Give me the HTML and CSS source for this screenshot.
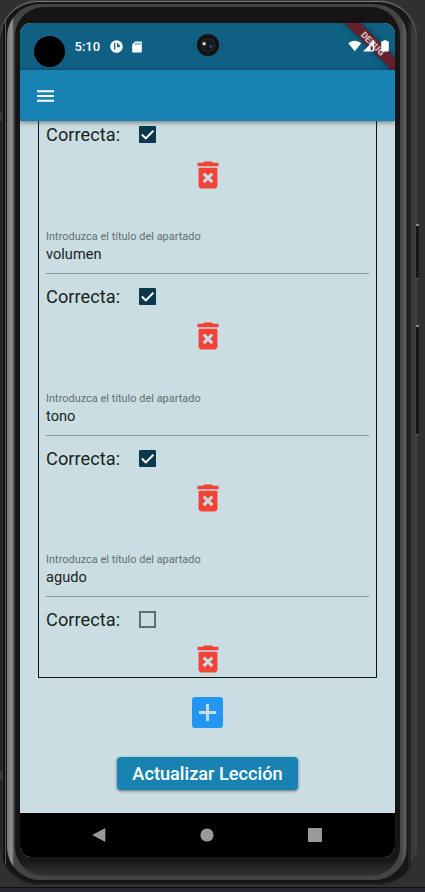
FILE: index.html
```
<!DOCTYPE html>
<html lang="es">
<head>
<meta charset="utf-8">
<title>Actualizar Lección</title>
<link rel="stylesheet" href="styles.css">
</head>
<body>
<svg width="0" height="0" class="defs">
  <symbol id="trash" viewBox="0 0 24 24">
    <path fill-rule="evenodd" d="M5.700 19c0 1.1.9 2 2 2h8.600c1.100 0 2-.9 2-2V8c0-.5-.4-.9-.9-.9H6.600c-.5 0-.9.4-.9.9zM5 3.900h3.500l1-.9h5l1 .9H19v2.300H5z"/>
    <path class="cross" d="M9.100 11l5.800 5.800M14.900 11l-5.800 5.800"/>
  </symbol>
  <symbol id="checked" viewBox="0 0 18 18">
    <rect width="18" height="18" rx="1"/>
    <path class="tick" d="M3 9l4.2 4.2L15.2 5"/>
  </symbol>
</svg>
<div class="phone">
  <i class="key left-top"></i><i class="key left-bottom"></i>
  <i class="key power"></i><i class="key volume"></i>
  <div class="rim">
    <div class="bezel">
      <div class="screen">
        <header class="status">
          <span class="punch"></span>
          <span class="clock">5:10</span>
          <svg class="app-dot" viewBox="0 0 13 13"><circle cx="6.5" cy="6.5" r="6.3" fill="#fff"/><path d="M4.700 2.800v7M7.600 3.200v3.300h1.500V4.500" fill="none" stroke="#106084" stroke-width="1.300"/></svg>
          <svg class="sd" viewBox="0 0 10 12"><path fill="#fff" d="M3.2.5H9a.8.8 0 0 1 .8.8v9.4a.8.8 0 0 1-.8.8H1a.8.8 0 0 1-.8-.8V3.6z"/><path d="M4 1.8v2M6 1.8v2M8 1.8v2" stroke="#106084" stroke-width=".9"/></svg>
          <svg class="camera" viewBox="0 0 24 24"><circle cx="12" cy="12" r="11.1" fill="#111214"/><circle cx="12" cy="12" r="7.500" fill="#202226"/><circle cx="12" cy="12" r="5.500" fill="#15181d"/><circle cx="8.2" cy="10.7" r="1.7" fill="#d5d7dc"/><circle cx="14.8" cy="13.3" r="1.5" fill="#294b76"/></svg>
          <div class="ribbon"><span>DEBUG</span></div>
          <svg class="signals" viewBox="0 0 41 12"><g fill="#fff"><path d="M.3 3.3C4-.2 9.500-.2 13.200 3.300L6.750 11.300z"/><path fill-rule="evenodd" d="M15 11.500L26 .5v11zM22.600 5.300h2.100v4.900h-2.100z"/><path d="M34 1.200h1.500V.3h3v.9H40a.8.8 0 0 1 .8.8v8.700a.8.8 0 0 1-.8.8h-6a.8.8 0 0 1-.8-.8V2a.8.8 0 0 1 .8-.8z"/></g></svg>
        </header>
        <nav class="appbar"><svg viewBox="0 0 18 12"><path fill="#fff" d="M0 0h18v2H0zM0 5h18v2H0zM0 10h18v2H0z"/></svg></nav>
        <main class="content">
          <section class="panel">
            <article class="answer">
              <div class="check"><span>Correcta:</span><svg><use href="#checked"/></svg></div>
              <svg class="trash"><use href="#trash"/></svg>
            </article>
            <article class="answer">
              <div class="field"><label>Introduzca el título del apartado</label><p>volumen</p></div>
              <div class="check"><span>Correcta:</span><svg><use href="#checked"/></svg></div>
              <svg class="trash"><use href="#trash"/></svg>
            </article>
            <article class="answer">
              <div class="field"><label>Introduzca el título del apartado</label><p>tono</p></div>
              <div class="check"><span>Correcta:</span><svg><use href="#checked"/></svg></div>
              <svg class="trash"><use href="#trash"/></svg>
            </article>
            <article class="answer">
              <div class="field"><label>Introduzca el título del apartado</label><p>agudo</p></div>
              <div class="check"><span>Correcta:</span><svg viewBox="0 0 18 18"><rect x="1" y="1" width="16" height="16" fill="none" stroke="#5d686b" stroke-width="2"/></svg></div>
              <svg class="trash"><use href="#trash"/></svg>
            </article>
          </section>
          <svg class="add" viewBox="0 0 18 18"><path fill="#2196f3" fill-rule="evenodd" d="M1.800 0h14.400A1.800 1.800 0 0 1 18 1.800v14.400a1.800 1.800 0 0 1-1.800 1.800H1.800A1.800 1.800 0 0 1 0 16.200V1.800A1.800 1.800 0 0 1 1.800 0zM8.150 4v4.150H4v1.700h4.150V14h1.700V9.850H14v-1.700H9.850V4z"/></svg>
          <button class="submit">Actualizar Lección</button>
        </main>
        <footer class="navbar">
          <svg viewBox="0 0 14 14"><path d="M.2 7L13.300 0v14z"/></svg>
          <svg viewBox="0 0 14 14"><circle cx="7" cy="7" r="6.600"/></svg>
          <svg viewBox="0 0 14 14"><rect width="14" height="14" rx=".7"/></svg>
        </footer>
      </div>
    </div>
  </div>
</div>
<div class="desk"></div>
</body>
</html>
```
FILE: styles.css
```
* { box-sizing: border-box; }
body {
  margin: 0;
  width: 425px;
  height: 892px;
  overflow: hidden;
  background: #2f3032;
  font-family: Roboto, sans-serif;
  color: #1b1f21;
}
.defs { position: absolute; }
svg { display: block; flex: none; }
.phone {
  position: relative;
  width: 417px;
  height: 886px;
  padding: 4px 10px 6px 7px;
  border-radius: 38px;
  background: linear-gradient(90deg, #222 0 2px, #303030 2px 3px, #111 3px 5px, #555 5px 6px, #161616 6px 408px, #222 408px 411px, #393939 411px 415px, #404040 415px);
  box-shadow: inset 0 1px #3a3a3a, inset 0 2px #777, inset 0 -1px #383838, inset 0 -3px #202020;
}
.key { position: absolute; display: block; }
.left-top, .left-bottom { left: 0; width: 3px; height: 9px; background: #383838; }
.left-top { top: 112px; }
.left-bottom { top: 771px; }
.power, .volume { left: 416px; width: 3px; background: #171717; border-top: 2px solid #888; border-bottom: 1px solid #555; }
.power { top: 224px; height: 55px; }
.volume { top: 325px; height: 110px; }
.rim {
  height: 876px;
  padding: 3px 7px 4px 8px;
  border-radius: 33px;
  background: linear-gradient(90deg, #777 0, #929292 5px, #444 7px, #444 392px, #454545 394px, #5b5b5b 398px, #404040);
}
.bezel {
  height: 869px;
  padding: 16px 5px 0;
  border-radius: 29px;
  background: linear-gradient(#151515 0 845px, #191919 854px, #343434 869px);
}
.screen {
  width: 375px;
  height: 834px;
  display: flex;
  flex-direction: column;
  overflow: hidden;
  border-radius: 11px;
  background: #c9dde2;
}
.status {
  position: relative;
  flex: none;
  height: 47px;
  display: flex;
  align-items: center;
  padding-left: 13.500px;
  background: #106084;
  color: #fff;
}
.punch { width: 31px; height: 31px; border-radius: 50%; background: #000; margin-top: 10px; }
.clock { width: 26px; margin-left: 10px; font-size: 13px; font-weight: 500; white-space: nowrap; }
.app-dot { width: 13px; height: 13px; margin-left: 9.500px; }
.sd { width: 10px; height: 12px; margin-left: 8.500px; }
.camera { position: absolute; left: 176px; top: 10px; width: 24px; height: 24px; }
.ribbon {
  position: absolute;
  left: 303px;
  top: 15px;
  width: 100px;
  height: 11px;
  transform: rotate(45deg);
  background: #64202b;
  box-shadow: 0 0 5px rgba(0,0,0,.5);
  color: #d0b9bf;
  font-size: 9.200px;
  font-weight: 900;
  line-height: 11px;
  text-align: center;
}
.signals { position: absolute; right: 6px; top: 17px; width: 41px; height: 12px; }
.appbar {
  position: relative;
  z-index: 1;
  flex: none;
  display: flex;
  align-items: center;
  height: 51px;
  padding-left: 17px;
  background: #1883b3;
  box-shadow: 0 1px 5px rgba(0,0,0,.5);
}
.appbar svg { width: 17px; height: 12px; }
.content { height: 692px; display: flex; flex-direction: column; align-items: center; overflow: hidden; }
.panel { flex: none; width: 339px; height: 557px; border: solid #111; border-width: 0 1px 1px; padding: 0 7px; }
.answer { display: flex; flex-direction: column; }
.field { height: 80px; margin-bottom: 2px; padding-top: 35px; border-bottom: 1px solid #899799; }
.field label { display: block; height: 16px; font-size: 10.900px; line-height: 16px; letter-spacing: .03px; color: #626e71; }
.field p { height: 18px; margin: 0; font-size: 14.600px; line-height: 18px; }
.check { display: flex; align-items: center; height: 37px; margin-top: 2px; font-size: 18.200px; }
.answer:first-child .check { height: 27px; margin: 0; }
.check span { width: 93px; letter-spacing: .05px; }
.check svg { width: 17px; height: 17px; }
#checked { fill: #0b394b; }
.tick { fill: none; stroke: #fff; stroke-width: 2; }
.trash { width: 36px; height: 36px; margin-top: 3px; margin-bottom: 1.500px; align-self: center; }
.answer:first-child .trash { margin-top: 9px; margin-bottom: 1px; }
#trash { fill: #f44336; }
.cross { stroke: #c9dde2; stroke-width: 2.100; }
.add { width: 31px; height: 31px; margin-top: 19px; }
.submit {
  flex: none;
  width: 181px;
  height: 33px;
  margin-top: 29px;
  padding: 0;
  border: 0;
  border-radius: 4px;
  background: #1883b3;
  box-shadow: 0 1px 3px rgba(0,0,0,.5);
  color: #fff;
  font: 500 18.200px/33px Roboto, sans-serif;
  white-space: nowrap;
}
.navbar { height: 44px; display: flex; align-items: center; justify-content: center; gap: 94px; padding-right: 1px; background: #000; fill: #999; }
.navbar svg { width: 14px; height: 14px; }
.desk { height: 6px; margin-top: 1px; margin-bottom: -1px; background: #282833; border-top: 1px solid #101014; }
```
